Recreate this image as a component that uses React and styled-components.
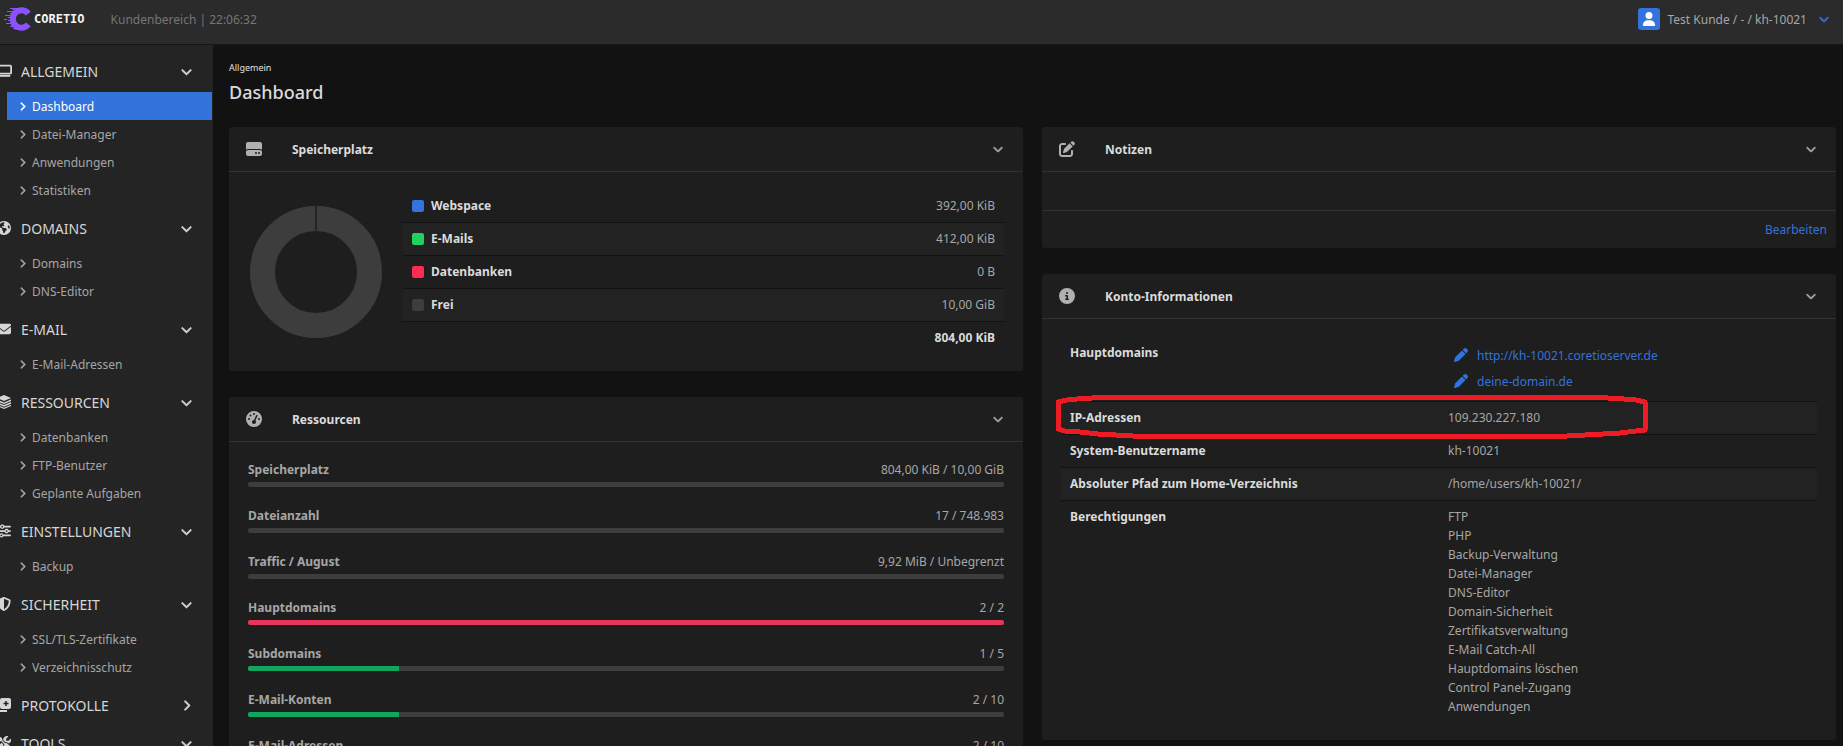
import React, { useState } from 'react';
import styled, { createGlobalStyle } from 'styled-components'
import {
    FaChevronDown,
    FaChevronRight,
    FaCircleInfo,
    FaEarthAmericas,
    FaEnvelope,
    FaGaugeHigh,
    FaHardDrive,
    FaPen,
    FaPenToSquare,
    FaScrewdriverWrench,
    FaShieldHalved,
    FaSliders,
    FaUser
} from 'react-icons/fa6'

const GlobalStyle = createGlobalStyle`
    *, *::before, *::after {
        box-sizing: border-box;
    }

    body {
        margin: 0;
        background: #121212;
        color: #a6a6a6;
        font-family: "Segoe UI", "Noto Sans", "Open Sans", sans-serif;
        font-size: 12px;
        line-height: 19px;
    }

    a {
        color: #3273dc;
        text-decoration: none;
    }

    button {
        padding: 0;
        border: 0;
        background: none;
        color: inherit;
        font: inherit;
        cursor: pointer;
    }
`

const Page = styled.div`
    display: flex;
    flex-direction: column;
    height: 100vh;
    overflow: hidden;
`

const TopBar = styled.header`
    display: flex;
    flex: none;
    align-items: center;
    height: 45px;
    padding: 0 14px 6px 4px;
    background: #2b2b2b;
    border-bottom: 1px solid #161616;
`

const Logo = styled.a`
    display: flex;
    align-items: center;
    gap: 3px;
    color: #f5f5f5;
    font-family: "DejaVu Sans Mono", monospace;
    font-size: 12px;
    font-weight: bold;
`

const Clock = styled.div`
    margin-left: 26px;
    color: #757575;
`

const UserMenu = styled.button`
    display: flex;
    align-items: center;
    margin-left: auto;

    > svg {
        margin-left: 12px;
        color: #3273dc;
    }
`

const Avatar = styled.span`
    display: flex;
    align-items: center;
    justify-content: center;
    width: 22px;
    height: 22px;
    margin-right: 8px;
    border-radius: 3px;
    background: #3273dc;
    color: #fff;
`

const ArrowDown = styled(FaChevronDown)`
    stroke: currentColor;
    stroke-width: 36px;
    overflow: visible;
`

const ArrowRight = styled(FaChevronRight)`
    stroke: currentColor;
    stroke-width: 36px;
    overflow: visible;
`

const Body = styled.div`
    display: flex;
    flex: 1;
    min-height: 0;
`

const Sidebar = styled.nav`
    flex: none;
    width: 213px;
    padding-top: 7px;
    overflow: hidden;
    background: #242424;
`

const SectionButton = styled.button`
    display: flex;
    align-items: center;
    width: 100%;
    height: 38px;
    padding-right: 21px;
    color: #d6d6d6;
    font-size: 14px;
    text-align: left;
    text-transform: uppercase;
`

const SectionIcon = styled.span`
    display: flex;
    flex: none;
    justify-content: center;
    width: 16px;
    margin-left: -4px;
    margin-right: 9px;
`

const SectionLabel = styled.span`
    flex: 1;
`

const SectionList = styled.ul`
    margin: 0;
    padding: 2px 1px 5px 7px;
    list-style: none;
`

const SectionLink = styled.a`
    display: flex;
    align-items: center;
    gap: 5px;
    height: 28px;
    padding-left: 11px;
    background: ${props => props.$active ? '#3273dc' : 'transparent'};
    color: ${props => props.$active ? '#fff' : '#a6a6a6'};
`

const Main = styled.main`
    flex: 1;
    min-width: 0;
    padding: 13px 7px 0 16px;
    overflow: hidden;
`

const Breadcrumb = styled.div`
    color: #e0e0e0;
    font-size: 9px;
    line-height: 20px;
`

const Title = styled.h1`
    margin: 0 0 21px;
    color: #dbdbdb;
    font-size: 18px;
    font-weight: 500;
    line-height: 28px;
`

const Columns = styled.div`
    display: grid;
    grid-template-columns: repeat(2, minmax(0, 1fr));
    align-items: start;
    gap: 19px;
`

const Column = styled.div`
    display: flex;
    flex-direction: column;
    gap: 26px;
`

const CardBox = styled.section`
    position: relative;
    border-radius: 3px;
    background: #1e1e1e;
`

const CardHeader = styled.header`
    display: flex;
    align-items: center;
    height: 45px;
    padding: 0 18px 0 17px;
    border-bottom: 1px solid #323232;
`

const CardIcon = styled.span`
    display: flex;
    width: 46px;
    font-size: 16px;
    color: #b0b0b0;
`

const CardTitle = styled.h2`
    flex: 1;
    margin: 0;
    color: #dbdbdb;
    font-size: 12px;
    font-weight: bold;
`

const CardToggle = styled.button`
    display: flex;
    justify-content: center;
    width: 14px;
    font-size: 10px;
`

const CardBody = styled.div`
    padding: 18px 19px;
`

const NoteBody = styled.div`
    height: 39px;
    border-bottom: 1px solid #323232;
`

const NoteFooter = styled.footer`
    display: flex;
    align-items: center;
    justify-content: flex-end;
    height: 37px;
    padding: 0 9px;
`

const Storage = styled.div`
    display: flex;
    align-items: center;
    gap: 19px;
`

const Donut = styled.svg`
    flex: none;
    width: 136px;
    height: 136px;
`

const Table = styled.table`
    width: 100%;
    border-collapse: separate;
    border-spacing: 0;
    table-layout: fixed;

    th, td {
        padding: 6px 9px 7px;
        border-bottom: 1px solid #121212;
        text-align: left;
        vertical-align: top;
    }

    th {
        color: #dbdbdb;
    }

    tr:nth-child(even) {
        background: #222;
    }

    tr:last-child th, tr:last-child td {
        padding-bottom: 6px;
        border-bottom: 0;
    }
`

const AmountTable = styled(Table)`
    td {
        text-align: right;
    }

    tr:last-child td {
        color: #dbdbdb;
        font-weight: bold;
    }
`

const LegendLabel = styled.div`
    display: flex;
    align-items: center;
    gap: 7px;
`

const Swatch = styled.span`
    width: 12px;
    height: 12px;
    border-radius: 2px;
    background: ${props => props.$color};
`

const Resource = styled.div`
    margin-bottom: 19px;
`

const ResourceText = styled.div`
    display: flex;
    justify-content: space-between;
    margin-bottom: 3px;
`

const Track = styled.div`
    height: 5px;
    border-radius: 2px;
    background: #3d3d3d;
    overflow: hidden;
`

const Fill = styled.div`
    height: 100%;
    background: ${props => props.$color};
`

const DomainLine = styled.div`
    display: flex;
    align-items: center;
    gap: 9px;
    height: 26px;
    padding-left: 6px;

    a {
        display: flex;
    }
`

const DomainCell = styled.td`
    && {
        padding-top: 5px;
    }
`

const Permissions = styled.ul`
    margin: 0;
    padding: 0;
    list-style: none;
`

const Marker = styled.svg`
    position: absolute;
    top: 120px;
    left: 13px;
    width: 593px;
    height: 45px;
    pointer-events: none;
`

const ScreenIcon = () => (
    <svg width="18" height="14" viewBox="0 0 18 14" fill="none" stroke="currentColor">
        <rect x="1" y="1" width="16" height="9" rx="1" strokeWidth="2" />
        <path d="M3 12.5h13" strokeWidth="2" />
    </svg>
)

const StackIcon = () => (
    <svg width="14" height="14" viewBox="0 0 14 14" fill="currentColor">
        <path d="M7 0l7 3-7 3-7-3z" />
        <path d="M0 4.400l7 3 7-3v1.700l-7 3-7-3zM0 7.100l7 3 7-3v1.700l-7 3-7-3zM0 9.800l7 3 7-3v1.200l-7 3-7-3z" />
    </svg>
)

const LogIcon = () => (
    <svg width="15" height="14" viewBox="0 0 15 14">
        <rect x="3" y="0" width="11" height="11" rx="2" fill="currentColor" />
        <path d="M1 3v8a2 2 0 0 0 2 2h7" fill="none" stroke="currentColor" strokeWidth="2" />
        <path d="M9 3v5M6.500 5.500h5" stroke="#242424" strokeWidth="1.500" />
    </svg>
)

const LogoMark = () => (
    <svg width="27" height="26" viewBox="0 0 27 26" fill="none" stroke="#8c52ff">
        <path d="M24.300 7.600A8.700 8.700 0 1 0 24.300 18.400" strokeWidth="6" />
        <path d="M6 2.500h10M3 5.500h9M6 7.500h5M1 9.500h8M4 11.500h4M0 13.500h3M4 14.500h5M2 17.500h8M6 20.500h7M9 22.500h6" strokeWidth="1" />
        <path d="M8 3.500h8M9 6.500h3M7 19.500h5M11 23.500h6" strokeWidth="1" opacity="0.700" />
    </svg>
)

const menu = [
    { label: 'Allgemein', icon: <ScreenIcon />, items: ['Dashboard', 'Datei-Manager', 'Anwendungen', 'Statistiken'] },
    { label: 'Domains', icon: <FaEarthAmericas />, items: ['Domains', 'DNS-Editor'] },
    { label: 'E-Mail', icon: <FaEnvelope />, items: ['E-Mail-Adressen'] },
    { label: 'Ressourcen', icon: <StackIcon />, items: ['Datenbanken', 'FTP-Benutzer', 'Geplante Aufgaben'] },
    { label: 'Einstellungen', icon: <FaSliders />, items: ['Backup'] },
    { label: 'Sicherheit', icon: <FaShieldHalved />, items: ['SSL/TLS-Zertifikate', 'Verzeichnisschutz'] },
    { label: 'Protokolle', icon: <LogIcon />, items: [], closed: true },
    { label: 'Tools', icon: <FaScrewdriverWrench />, items: [] }
]

const storage = [
    { label: 'Webspace', value: '392,00 KiB', color: '#3273dc' },
    { label: 'E-Mails', value: '412,00 KiB', color: '#23d160' },
    { label: 'Datenbanken', value: '0 B', color: '#ff2b56' },
    { label: 'Frei', value: '10,00 GiB', color: '#3d3d3d' }
]

const resources = [
    { label: 'Speicherplatz', value: '804,00 KiB / 10,00 GiB', percent: 0 },
    { label: 'Dateianzahl', value: '17 / 748.983', percent: 0 },
    { label: 'Traffic / August', value: '9,92 MiB / Unbegrenzt', percent: 0 },
    { label: 'Hauptdomains', value: '2 / 2', percent: 100 },
    { label: 'Subdomains', value: '1 / 5', percent: 20 },
    { label: 'E-Mail-Konten', value: '2 / 10', percent: 20 },
    { label: 'E-Mail-Adressen', value: '2 / 10', percent: 20 }
]

const domains = ['http://kh-10021.coretioserver.de', 'deine-domain.de']

const permissions = [
    'FTP',
    'PHP',
    'Backup-Verwaltung',
    'Datei-Manager',
    'DNS-Editor',
    'Domain-Sicherheit',
    'Zertifikatsverwaltung',
    'E-Mail Catch-All',
    'Hauptdomains löschen',
    'Control Panel-Zugang',
    'Anwendungen'
]

function MenuSection({ section }) {
    const [open, setOpen] = useState(!section.closed)

    return (
        <div>
            <SectionButton type="button" aria-expanded={open} onClick={() => setOpen(!open)}>
                <SectionIcon>{section.icon}</SectionIcon>
                <SectionLabel>{section.label}</SectionLabel>
                {open ? <ArrowDown size={11} /> : <ArrowRight size={11} />}
            </SectionButton>
            {open && section.items.length > 0 &&
                <SectionList>
                    {section.items.map(item => (
                        <li key={item}>
                            <SectionLink href="#" $active={item === 'Dashboard'}>
                                <ArrowRight size={9} />
                                {item}
                            </SectionLink>
                        </li>
                    ))}
                </SectionList>
            }
        </div>
    )
}

function Card({ icon, title, children }) {
    const [open, setOpen] = useState(true)

    return (
        <CardBox>
            <CardHeader>
                <CardIcon>{icon}</CardIcon>
                <CardTitle>{title}</CardTitle>
                <CardToggle type="button" aria-label={title} aria-expanded={open} onClick={() => setOpen(!open)}>
                    <ArrowDown />
                </CardToggle>
            </CardHeader>
            {open && children}
        </CardBox>
    )
}

function StorageCard() {
    return (
        <Card icon={<FaHardDrive />} title="Speicherplatz">
            <CardBody>
                <Storage>
                    <Donut viewBox="0 0 136 136">
                        <circle cx="68" cy="68" r="53.500" fill="none" stroke="#3d3d3d" strokeWidth="25" />
                        <path d="M68 1v27" stroke="#262626" strokeWidth="2" />
                    </Donut>
                    <AmountTable>
                        <tbody>
                            {storage.map(row => (
                                <tr key={row.label}>
                                    <th scope="row">
                                        <LegendLabel><Swatch $color={row.color} />{row.label}</LegendLabel>
                                    </th>
                                    <td>{row.value}</td>
                                </tr>
                            ))}
                            <tr>
                                <td colSpan="2">804,00 KiB</td>
                            </tr>
                        </tbody>
                    </AmountTable>
                </Storage>
            </CardBody>
        </Card>
    )
}

function ResourcesCard() {
    return (
        <Card icon={<FaGaugeHigh />} title="Ressourcen">
            <CardBody>
                {resources.map(item => (
                    <Resource key={item.label}>
                        <ResourceText>
                            <strong>{item.label}</strong>
                            <span>{item.value}</span>
                        </ResourceText>
                        <Track role="progressbar" aria-label={item.label} aria-valuenow={item.percent}>
                            <Fill $color={item.percent === 100 ? '#e8365a' : '#10a660'} style={{ width: item.percent + '%' }} />
                        </Track>
                    </Resource>
                ))}
            </CardBody>
        </Card>
    )
}

function NotesCard() {
    return (
        <Card icon={<FaPenToSquare />} title="Notizen">
            <NoteBody />
            <NoteFooter><a href="#">Bearbeiten</a></NoteFooter>
        </Card>
    )
}

function AccountCard() {
    return (
        <Card icon={<FaCircleInfo />} title="Konto-Informationen">
            <CardBody>
                <Table>
                    <tbody>
                        <tr>
                            <th scope="row">Hauptdomains</th>
                            <DomainCell>
                                {domains.map(domain => (
                                    <DomainLine key={domain}>
                                        <a href="#" aria-label={domain}><FaPen size={14} /></a>
                                        <a href="#">{domain}</a>
                                    </DomainLine>
                                ))}
                            </DomainCell>
                        </tr>
                        <tr>
                            <th scope="row">IP-Adressen</th>
                            <td>109.230.227.180</td>
                        </tr>
                        <tr>
                            <th scope="row">System-Benutzername</th>
                            <td>kh-10021</td>
                        </tr>
                        <tr>
                            <th scope="row">Absoluter Pfad zum Home-Verzeichnis</th>
                            <td>/home/users/kh-10021/</td>
                        </tr>
                        <tr>
                            <th scope="row">Berechtigungen</th>
                            <td>
                                <Permissions>
                                    {permissions.map(name => <li key={name}>{name}</li>)}
                                </Permissions>
                            </td>
                        </tr>
                    </tbody>
                </Table>
            </CardBody>
            <Marker viewBox="0 0 593 45" fill="none" stroke="#ed1c24" strokeWidth="5" strokeLinejoin="round" shapeRendering="crispEdges">
                <path d="M3 8L12 6L22 5L37 4L61 3H530L553 4L569 5L581 6L590 8V36L581 37L565 39L548 40L512 42H78L43 40L25 38L10 37L3 35Z" />
            </Marker>
        </Card>
    )
}

export default function App() {
    return (
        <Page>
            <GlobalStyle />
            <TopBar>
                <Logo href="#"><LogoMark />CORETIO</Logo>
                <Clock>Kundenbereich | 22:06:32</Clock>
                <UserMenu type="button">
                    <Avatar><FaUser size={14} /></Avatar>
                    Test Kunde / - / kh-10021
                    <ArrowDown size={10} />
                </UserMenu>
            </TopBar>
            <Body>
                <Sidebar>
                    {menu.map(section => <MenuSection key={section.label} section={section} />)}
                </Sidebar>
                <Main>
                    <Breadcrumb>Allgemein</Breadcrumb>
                    <Title>Dashboard</Title>
                    <Columns>
                        <Column>
                            <StorageCard />
                            <ResourcesCard />
                        </Column>
                        <Column>
                            <NotesCard />
                            <AccountCard />
                        </Column>
                    </Columns>
                </Main>
            </Body>
        </Page>
    );
}
